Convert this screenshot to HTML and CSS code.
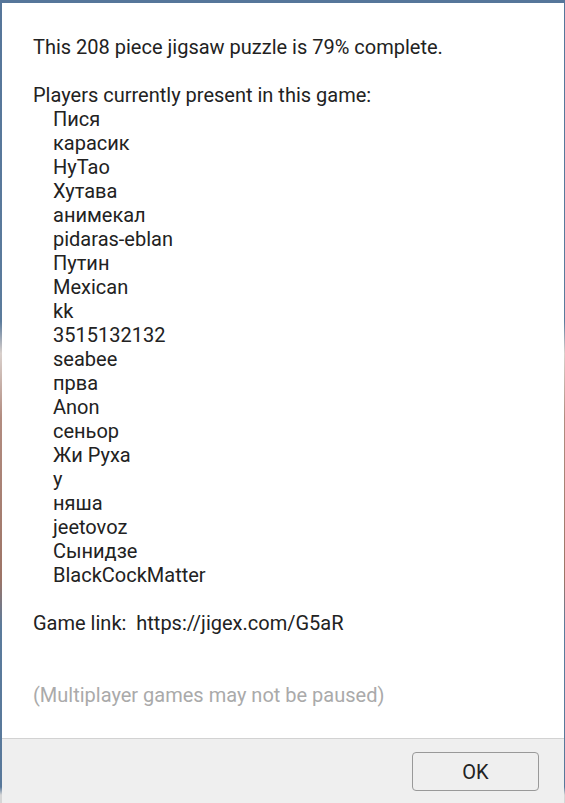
FILE: index.html
```html
<!DOCTYPE html>
<html lang="en">
<head>
  <meta charset="UTF-8" />
  <meta name="viewport" content="width=device-width, initial-scale=1" />
  <title>Puzzle Info</title>
  <link rel="stylesheet" href="styles.css">
</head>
<body>

  <div class="dialog">
    <div class="content">
      <p class="status">This 208 piece jigsaw puzzle is 79% complete.</p>

      <p>Players currently present in this game:</p>
      <ul class="players">
        <li>Пися</li>
        <li>карасик</li>
        <li>HyTao</li>
        <li>Хутава</li>
        <li>анимекал</li>
        <li>pidaras-eblan</li>
        <li>Путин</li>
        <li>Mexican</li>
        <li>kk</li>
        <li>3515132132</li>
        <li>seabee</li>
        <li>прва</li>
        <li>Anon</li>
        <li>сеньор</li>
        <li>Жи Руха</li>
        <li>у</li>
        <li>няша</li>
        <li>jeetovoz</li>
        <li>Сынидзе</li>
        <li>BlackCockMatter</li>
      </ul>

      <p class="link">Game link:  https://jigex.com/G5aR</p>

      <p class="note">(Multiplayer games may not be paused)</p>
    </div>

    <div class="footer">
      <button type="button">OK</button>
    </div>
  </div>

</body>
</html>
```

FILE: styles.css
```css
html, body {
  height: 100%;
}

body {
  margin: 0;
  font-family: Roboto, 'Liberation Sans', sans-serif;
  background: linear-gradient(to bottom,
    #56769a 0%, #5b7b9c 40%, #d9d0cc 44%, #b28c80 52%,
    #9d7466 72%, #5b7b9c 78%, #58789a 98%, #d6d6d6 99%);
  overflow: hidden;
}

.dialog {
  margin: 3px 1px 0 2px;
  background: #fff;
  height: calc(100% + 20px);
  display: flex;
  flex-direction: column;
}

.content {
  padding: 32px 31px 31px;
  font-size: 20px;
  line-height: 24px;
  color: #222;
}

.content p {
  margin: 0;
}

.content .status {
  margin-bottom: 24px;
}

.players {
  list-style: none;
  margin: 0 0 24px;
  padding: 0 0 0 20px;
}

.content .link {
  white-space: pre;
  margin-bottom: 48px;
}

.note {
  color: #aaa;
}

.footer {
  flex: 1;
  background: #efefef;
  border-top: 1px solid #d2d2d2;
  padding: 13px 25px 0 0;
  display: flex;
  justify-content: flex-end;
  align-items: flex-start;
}

button {
  width: 127px;
  height: 39px;
  background: #efefef;
  border: 1px solid #999;
  border-radius: 4px;
  font-family: Roboto, 'Liberation Sans', sans-serif;
  font-size: 20px;
  color: #222;
  cursor: pointer;
}
```
